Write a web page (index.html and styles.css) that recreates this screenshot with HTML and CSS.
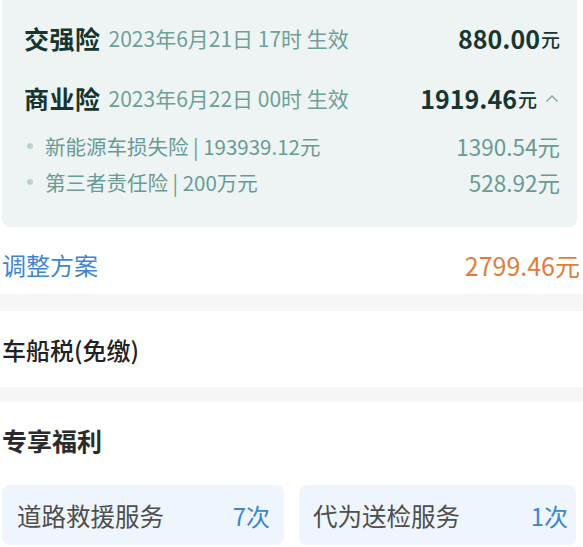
FILE: index.html
```html
<!DOCTYPE html>
<html lang="zh">
<head>
<meta charset="utf-8">
<link rel="stylesheet" href="styles.css">
</head>
<body>
<div class="page">
  <section class="plan">
    <div class="line">
      <div class="left"><span class="name">交强险</span><span class="date">2023年6月21日 17时 生效</span></div>
      <div class="amt"><span class="num">880.00</span><span class="unit">元</span></div>
    </div>
    <div class="line">
      <div class="left"><span class="name">商业险</span><span class="date">2023年6月22日 00时 生效</span></div>
      <div class="amt"><span class="num">1919.46</span><span class="unit">元</span>
        <svg class="chev" width="14" height="9" viewBox="0 0 14 9"><path d="M1.5 7.5 L7 2 L12.5 7.5" fill="none" stroke="#7fa6a1" stroke-width="1.4"/></svg>
      </div>
    </div>
    <div class="sub">
      <div class="subleft"><span class="dot"></span>新能源车损失险 | 193939.12元</div>
      <div class="subamt">1390.54元</div>
    </div>
    <div class="sub">
      <div class="subleft"><span class="dot"></span>第三者责任险 | 200万元</div>
      <div class="subamt">528.92元</div>
    </div>
  </section>
  <div class="row adjust">
    <span class="link">调整方案</span>
    <span class="total">2799.46元</span>
  </div>
  <div class="band b1"></div>
  <div class="row tax"><span>车船税(免缴)</span></div>
  <div class="band b2"></div>
  <div class="welfare-title">专享福利</div>
  <div class="benefits">
    <div class="bcard"><span class="bname">道路救援服务</span><span class="bcount">7次</span></div>
    <div class="bcard right"><span class="bname">代为送检服务</span><span class="bcount">1次</span></div>
  </div>
</div>
</body>
</html>
```
FILE: styles.css
```css
* { box-sizing: border-box; }
html, body { margin: 0; padding: 0; background: #ffffff; }
body {
  font-family: "Noto Sans CJK SC", "Noto Sans", sans-serif;
  width: 583px;
  height: 547px;
  overflow: hidden;
}
.page { width: 583px; }
.plan {
  margin: -10px 6px 0 2px;
  padding: 18px 17px 27px 22px;
  background: #edf4f3;
  border-radius: 8px;
}
.line {
  height: 60px;
  display: flex;
  align-items: center;
  justify-content: space-between;
}
.left { display: flex; align-items: center; }
.name {
  font-size: 25px;
  font-weight: 700;
  color: #163430;
  letter-spacing: 0.5px;
}
.date {
  margin-left: 8px;
  font-size: 21px;
  color: #6f9f99;
}
.amt { display: flex; align-items: center; color: #173531; }
.num { font-size: 25px; font-weight: 700; }
.unit { font-size: 19px; font-weight: 500; margin-left: 1px; }
.chev { margin-left: 8px; margin-right: 1px; }
.sub {
  height: 36px;
  display: flex;
  align-items: center;
  justify-content: space-between;
  font-size: 20.5px;
  color: #6a9a95;
}
.subleft { display: flex; align-items: center; }
.dot {
  width: 6px;
  height: 6px;
  border-radius: 50%;
  background: #bcd2cf;
  margin: 0 12px 0 3px;
}
.subamt { font-size: 22.5px; }
.row {
  display: flex;
  align-items: center;
  justify-content: space-between;
  padding: 0 3px 0 2px;
}
.adjust { height: 67px; padding-top: 8px; }
.link { font-size: 24px; color: #3f86cf; }
.total { font-size: 25px; color: #e07d3a; }
.band { background: #f5f5f5; }
.b1 { height: 17px; }
.b2 { height: 15px; }
.tax { height: 76px; font-size: 24px; font-weight: 500; color: #222; }
.welfare-title {
  height: 76px;
  display: flex;
  align-items: center;
  padding-left: 2px;
  font-size: 25px;
  font-weight: 700;
  color: #2b2b2b;
}
.benefits {
  margin-top: 7px;
  padding: 0 7px 0 2px;
  display: grid;
  grid-template-columns: 282px 277px;
  column-gap: 15px;
}
.bcard {
  height: 60px;
  background: #eef5fd;
  border-radius: 8px;
  display: flex;
  align-items: center;
  justify-content: space-between;
  padding: 0 14px 0 15px;
}
.bcard.right { padding: 0 8px 0 14px; }
.bname { font-size: 24.5px; color: #4e4e4e; }
.bcount { font-size: 24px; color: #3d85cf; }
```
